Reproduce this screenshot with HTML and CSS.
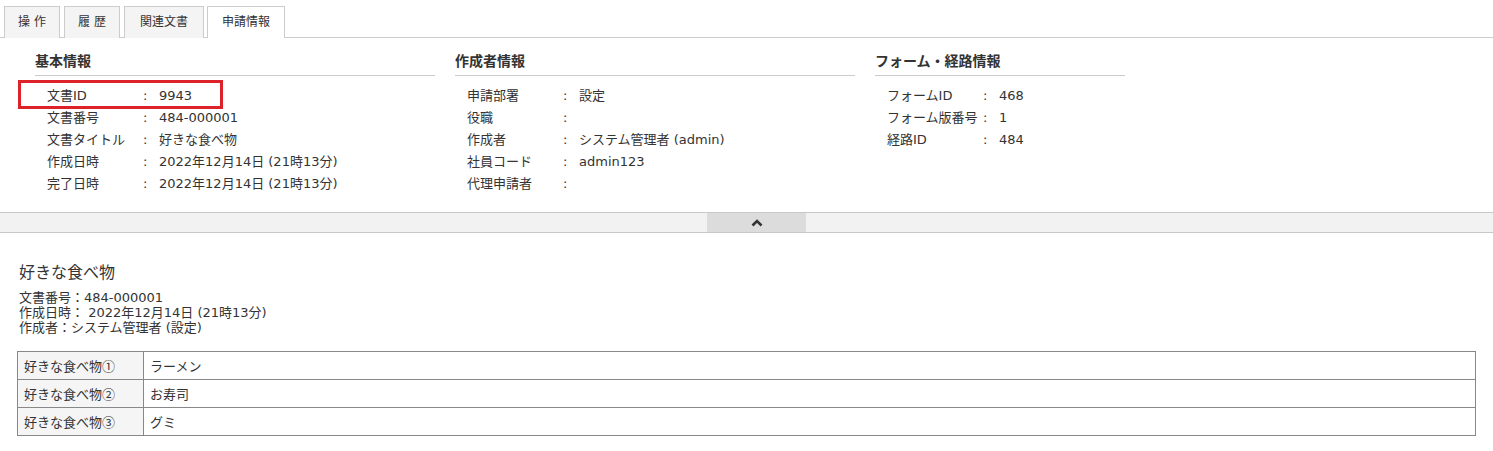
FILE: index.html
```html
<!DOCTYPE html>
<html lang="ja">
<head>
  <meta charset="UTF-8" />
  <title>申請情報</title>
  <link rel="stylesheet" href="styles.css">
</head>
<body>

  <div class="tabs">
    <div class="tab narrow">操 作</div>
    <div class="tab narrow">履 歴</div>
    <div class="tab">関連文書</div>
    <div class="tab active">申請情報</div>
  </div>

  <div class="info">
    <div class="info-col">
      <h2>基本情報</h2>
      <div class="row"><span class="label">文書ID</span><span class="colon">:</span><span>9943</span><div class="mark"></div></div>
      <div class="row"><span class="label">文書番号</span><span class="colon">:</span><span>484-000001</span></div>
      <div class="row"><span class="label">文書タイトル</span><span class="colon">:</span><span>好きな食べ物</span></div>
      <div class="row"><span class="label">作成日時</span><span class="colon">:</span><span>2022年12月14日 (21時13分)</span></div>
      <div class="row"><span class="label">完了日時</span><span class="colon">:</span><span>2022年12月14日 (21時13分)</span></div>
    </div>
    <div class="info-col">
      <h2>作成者情報</h2>
      <div class="row"><span class="label">申請部署</span><span class="colon">:</span><span>設定</span></div>
      <div class="row"><span class="label">役職</span><span class="colon">:</span><span></span></div>
      <div class="row"><span class="label">作成者</span><span class="colon">:</span><span>システム管理者 (admin)</span></div>
      <div class="row"><span class="label">社員コード</span><span class="colon">:</span><span>admin123</span></div>
      <div class="row"><span class="label">代理申請者</span><span class="colon">:</span><span></span></div>
    </div>
    <div class="info-col">
      <h2>フォーム・経路情報</h2>
      <div class="row"><span class="label">フォームID</span><span class="colon">:</span><span>468</span></div>
      <div class="row"><span class="label">フォーム版番号</span><span class="colon">:</span><span>1</span></div>
      <div class="row"><span class="label">経路ID</span><span class="colon">:</span><span>484</span></div>
    </div>
  </div>

  <div class="collapse-bar">
    <div class="collapse-btn">
      <svg width="12" height="8" viewBox="0 0 12 8"><polyline points="1.5,6.5 6,2 10.5,6.5" fill="none" stroke="#333" stroke-width="2.6"/></svg>
    </div>
  </div>

  <div class="doc">
    <h1>好きな食べ物</h1>
    <div class="meta">
      <div>文書番号：484-000001</div>
      <div>作成日時： 2022年12月14日 (21時13分)</div>
      <div>作成者：システム管理者 (設定)</div>
    </div>

    <table class="fields">
      <tr><th>好きな食べ物<span class="circ">①</span></th><td>ラーメン</td></tr>
      <tr><th>好きな食べ物<span class="circ">②</span></th><td>お寿司</td></tr>
      <tr><th>好きな食べ物<span class="circ">③</span></th><td>グミ</td></tr>
    </table>
  </div>

</body>
</html>
```

FILE: styles.css
```css
* {
  margin: 0;
  padding: 0;
  box-sizing: border-box;
}

body {
  font-family: "DejaVu Sans", "Noto Sans CJK JP", sans-serif;
  font-size: 13px;
  color: #333;
  background-color: #fff;
}

.tabs {
  display: flex;
  gap: 4px;
  padding: 6px 0 0 4px;
  border-bottom: 1px solid #ccc;
}

.tab {
  height: 32px;
  padding: 0 15px;
  line-height: 30px;
  border: 1px solid #ccc;
  border-bottom: none;
  background-color: #f4f4f4;
  margin-bottom: -1px;
  font-size: 12px;
  color: #333;
}

.tab.narrow {
  width: 56px;
  text-align: center;
  padding: 0;
}

.tab.active {
  background-color: #fff;
  margin-left: -1px;
  padding: 0 14px;
}

.info {
  display: grid;
  grid-template-columns: 400px 400px 250px;
  gap: 20px;
  padding: 13px 0 17px 35px;
}

.info h2 {
  font-size: 14px;
  font-weight: bold;
  height: 25px;
  line-height: 21px;
  border-bottom: 1px solid #ccc;
  margin-bottom: 9px;
}

.row {
  display: flex;
  height: 22px;
  line-height: 22px;
  padding-left: 12px;
  position: relative;
}

.label {
  width: 96px;
  flex-shrink: 0;
}

.colon {
  width: 16px;
  flex-shrink: 0;
}

.mark {
  position: absolute;
  left: -17px;
  top: -5px;
  width: 205px;
  height: 29px;
  border: 3px solid #dd2229;
}

.collapse-bar {
  display: flex;
  height: 21px;
  background-color: #f2f2f2;
  border-top: 1px solid #c8c8c8;
  border-bottom: 1px solid #c8c8c8;
}

.collapse-btn {
  margin-left: 707px;
  width: 99px;
  background-color: #dcdcdc;
  display: flex;
  align-items: center;
  justify-content: center;
}

.doc {
  padding: 29px 17px 0 17px;
}

.doc h1 {
  font-size: 16px;
  font-weight: normal;
  padding-left: 2px;
  line-height: 22px;
  margin-bottom: 6px;
}

.meta {
  line-height: 15px;
  padding-left: 2px;
}

.fields {
  margin-top: 16px;
  width: 1459px;
  border-collapse: collapse;
}

.fields th,
.fields td {
  height: 28px;
  border: 1px solid #888;
  font-weight: normal;
  text-align: left;
  padding: 0 6px;
  vertical-align: middle;
}

.fields th {
  width: 126px;
  background-color: #f5f5f5;
}

.circ {
  font-family: "Noto Sans CJK JP", sans-serif;
}
```
